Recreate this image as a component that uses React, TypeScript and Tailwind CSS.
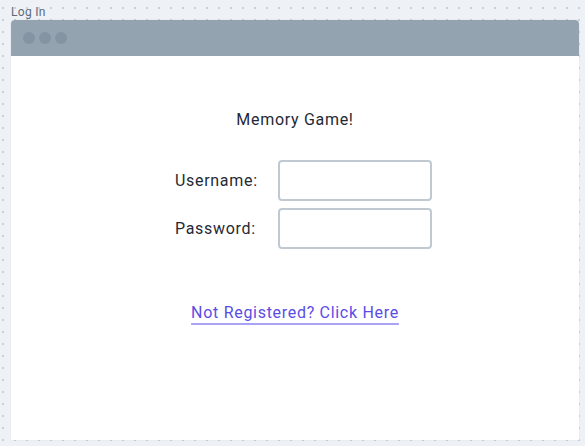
import React from "react";

export default function App() {
  const fields = [
    { id: "username", label: "Username:", type: "text" },
    { id: "password", label: "Password:", type: "password" },
  ];

  return (
    <div className="w-[585px] h-[446px] bg-[#eef1f5] bg-[radial-gradient(circle,#c8d0d9_1px,transparent_1.5px)] bg-[size:12px_12px] bg-[position:-3px_2px] font-['Roboto',sans-serif] px-[11px] pt-[5px] overflow-hidden">
      {/* Label above the frame */}
      <div className="text-[12px] leading-[15px] tracking-[0.3px] text-[#5b6b7c]">Log In</div>

      {/* Window frame */}
      <div className="w-[568px] h-[420px] bg-white rounded-t-[4px] shadow-[0_0_2px_rgba(0,0,0,0.08)] flex flex-col">
        <div className="h-[36px] bg-[#94a3b0] rounded-t-[4px] flex items-center gap-[4px] pl-[12px]">
          <span className="w-[12px] h-[12px] rounded-full bg-[#8494a2]" />
          <span className="w-[12px] h-[12px] rounded-full bg-[#8494a2]" />
          <span className="w-[12px] h-[12px] rounded-full bg-[#8494a2]" />
        </div>

        <div className="flex flex-col items-center pt-[52px] text-[16px] tracking-[0.7px]">
          <h1 className="leading-[24px] text-[#1f2a36]">Memory Game!</h1>

          <div className="mt-[28px] flex flex-col gap-[7px] ml-[17px]">
            {fields.map(({ id, label, type }) => (
              <div key={id} className="flex items-center">
                <label htmlFor={id} className="w-[103px] text-[#1f2a36]">
                  {label}
                </label>
                <input
                  id={id}
                  type={type}
                  className="w-[154px] h-[41px] border-2 border-[#c0c9d2] rounded-[4px] bg-white outline-none"
                />
              </div>
            ))}
          </div>

          <a
            href="#"
            className="mt-[52px] leading-[24px] text-[#5a4de6] underline decoration-2 decoration-[#a9a3f7] underline-offset-[5px]"
          >
            Not Registered? Click Here
          </a>
        </div>
      </div>
    </div>
  );
}
